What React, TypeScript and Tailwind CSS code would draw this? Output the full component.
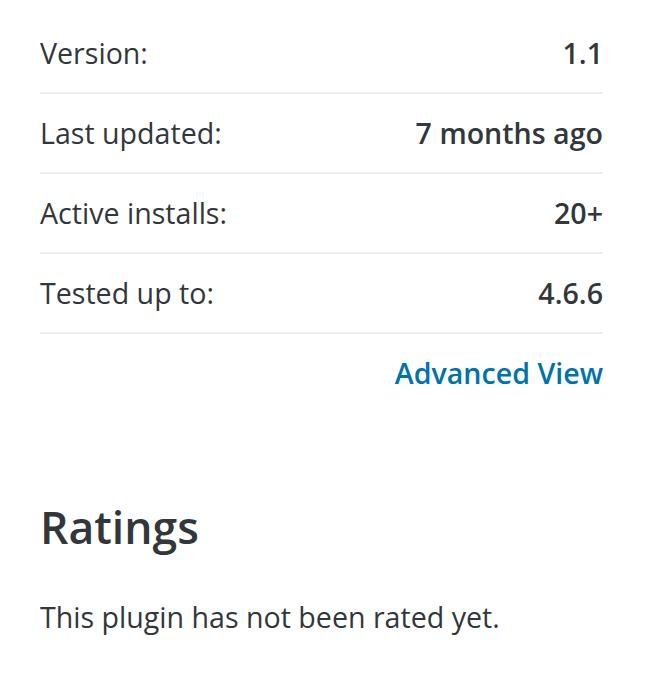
const rows = [
  { label: "Version:", value: "1.1" },
  { label: "Last updated:", value: "7 months ago" },
  { label: "Active installs:", value: "20+" },
  { label: "Tested up to:", value: "4.6.6" },
];

export default function App() {
  return (
    <div className="min-h-screen bg-white pl-[40px] pt-[14px] font-['Open_Sans',sans-serif] text-[#32373c]">
      <div className="w-[563px]">
        <ul>
          {rows.map((row) => (
            <li
              key={row.label}
              className="flex justify-between border-b-2 border-[#eeeeee] pt-[18px] pb-[18px] text-[28.6px] leading-[42px]"
            >
              <span>{row.label}</span>
              <strong className="font-semibold">{row.value}</strong>
            </li>
          ))}
        </ul>
        <div className="flex justify-end pt-[18px] text-[28.6px] leading-[42px]">
          <a href="#" className="font-semibold text-[#0073aa]">
            Advanced View
          </a>
        </div>
        <h2 className="mt-[106px] text-[44.5px] leading-[53px] font-semibold">Ratings</h2>
        <p className="mt-[43px] text-[28.6px] leading-[42px]">This plugin has not been rated yet.</p>
      </div>
    </div>
  );
}
